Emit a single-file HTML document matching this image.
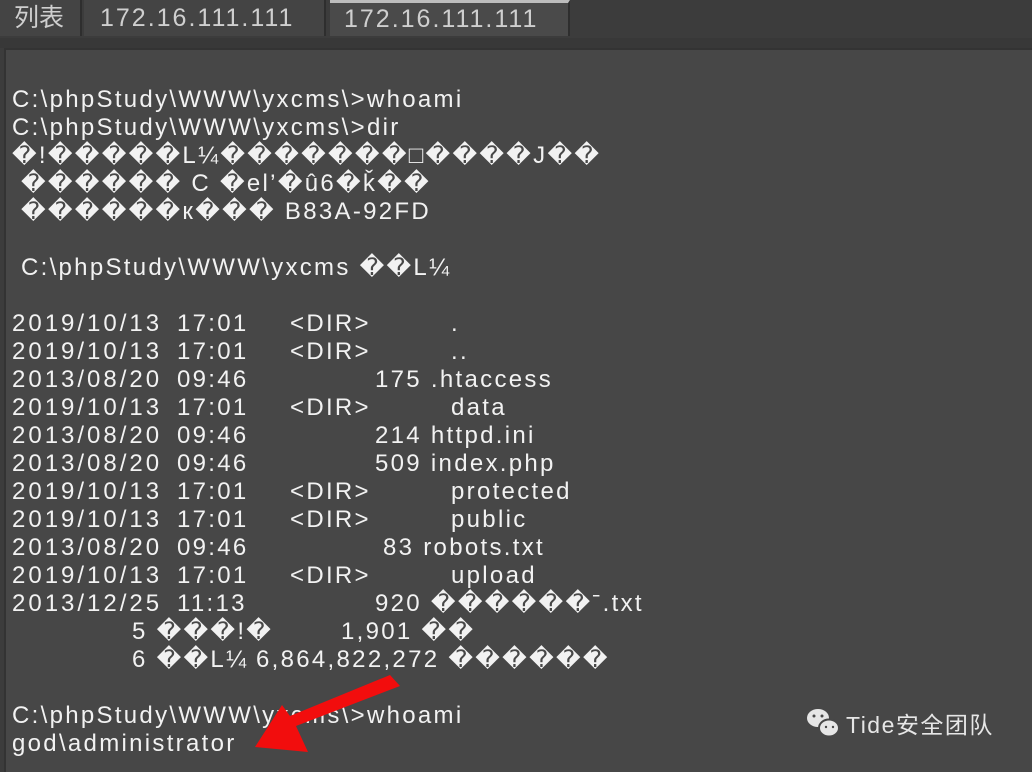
<!DOCTYPE html>
<html><head><meta charset="utf-8"><style>
html,body{margin:0;padding:0}
body{width:1032px;height:772px;background:#3c3c3c;position:relative;overflow:hidden;font-family:"Liberation Sans","Noto Sans CJK SC",sans-serif}
.tab{position:absolute;top:0;height:36px;background:#474747;color:#cfcfcf;font-size:25px;line-height:36px;box-sizing:border-box;border-right:2px solid #2e2e2e;letter-spacing:2px}
.term{position:absolute;left:4px;top:48px;right:0;bottom:0;background:#474747;border-top:2px solid #333;border-left:2px solid #333}
.r{position:absolute;color:#f2f2f2;font-size:24px;white-space:pre;line-height:28px;letter-spacing:2.3px}
.d{letter-spacing:3px}
</style></head><body>
<div class="tab" style="left:0;width:82px;padding-left:14px;background:#444;letter-spacing:0">列表</div>
<div class="tab" style="left:84px;width:242px;padding-left:16px;background:#444">172.16.111.111</div>
<div class="tab" style="left:330px;width:240px;padding-left:14px;background:#4a4a4a;border-top:3px solid #bdbdbd;line-height:33px">172.16.111.111</div>
<div style="position:absolute;left:0;top:38px;width:1032px;height:10px;background:#383838"></div>
<div class="term"></div>
<div class="r" style="left:12px;top:86px">C:\phpStudy\WWW\yxcms\&gt;whoami</div>
<div class="r" style="left:12px;top:114px">C:\phpStudy\WWW\yxcms\&gt;dir</div>
<div class="r" style="left:12px;top:142px">�!�����L¼�������□����J��</div>
<div class="r" style="left:12px;top:170px"> ������ C �el’�û6�ǩ��</div>
<div class="r" style="left:12px;top:198px"> ������к��� B83A-92FD</div>
<div class="r" style="left:12px;top:254px"> C:\phpStudy\WWW\yxcms ��L¼</div>

<div class="r d" style="left:12px;top:310px">2019/10/13</div><div class="r" style="left:177px;top:310px">17:01</div><div class="r" style="left:290px;top:310px">&lt;DIR&gt;</div><div class="r" style="left:451px;top:310px">.</div>
<div class="r d" style="left:12px;top:338px">2019/10/13</div><div class="r" style="left:177px;top:338px">17:01</div><div class="r" style="left:290px;top:338px">&lt;DIR&gt;</div><div class="r" style="left:451px;top:338px">..</div>
<div class="r d" style="left:12px;top:366px">2013/08/20</div><div class="r" style="left:177px;top:366px">09:46</div><div class="r" style="left:375px;top:366px">175 .htaccess</div>
<div class="r d" style="left:12px;top:394px">2019/10/13</div><div class="r" style="left:177px;top:394px">17:01</div><div class="r" style="left:290px;top:394px">&lt;DIR&gt;</div><div class="r" style="left:451px;top:394px">data</div>
<div class="r d" style="left:12px;top:422px">2013/08/20</div><div class="r" style="left:177px;top:422px">09:46</div><div class="r" style="left:375px;top:422px">214 httpd.ini</div>
<div class="r d" style="left:12px;top:450px">2013/08/20</div><div class="r" style="left:177px;top:450px">09:46</div><div class="r" style="left:375px;top:450px">509 index.php</div>
<div class="r d" style="left:12px;top:478px">2019/10/13</div><div class="r" style="left:177px;top:478px">17:01</div><div class="r" style="left:290px;top:478px">&lt;DIR&gt;</div><div class="r" style="left:451px;top:478px">protected</div>
<div class="r d" style="left:12px;top:506px">2019/10/13</div><div class="r" style="left:177px;top:506px">17:01</div><div class="r" style="left:290px;top:506px">&lt;DIR&gt;</div><div class="r" style="left:451px;top:506px">public</div>
<div class="r d" style="left:12px;top:534px">2013/08/20</div><div class="r" style="left:177px;top:534px">09:46</div><div class="r" style="left:383px;top:534px">83 robots.txt</div>
<div class="r d" style="left:12px;top:562px">2019/10/13</div><div class="r" style="left:177px;top:562px">17:01</div><div class="r" style="left:290px;top:562px">&lt;DIR&gt;</div><div class="r" style="left:451px;top:562px">upload</div>
<div class="r d" style="left:12px;top:590px">2013/12/25</div><div class="r" style="left:177px;top:590px">11:13</div><div class="r" style="left:375px;top:590px">920 ������ˉ.txt</div>
<div class="r" style="left:132px;top:618px">5 ���!�</div><div class="r" style="left:341px;top:618px">1,901 ��</div>
<div class="r" style="left:132px;top:646px">6 ��L¼</div><div class="r" style="left:256px;top:646px">6,864,822,272 ������</div>
<div class="r" style="left:12px;top:702px">C:\phpStudy\WWW\yxcms\&gt;whoami</div>
<div class="r" style="left:12px;top:730px">god\administrator</div>

<svg style="position:absolute;left:0;top:0" width="1032" height="772">
<polygon points="390,675 400,686 296,726 308,752 255,747 282,705 290,716" fill="#f20d0d"/>
<g fill="#e6e6e6">
<ellipse cx="818" cy="718" rx="11" ry="9"/>
<ellipse cx="829" cy="728" rx="10" ry="8.5" stroke="#474747" stroke-width="2"/>
<circle cx="814" cy="716" r="1.5" fill="#474747"/><circle cx="822" cy="716" r="1.5" fill="#474747"/>
<circle cx="826" cy="727" r="1.2" fill="#474747"/><circle cx="833" cy="727" r="1.2" fill="#474747"/>
</g>
</svg>
<div style="position:absolute;left:846px;top:710px;font-size:23px;color:#e6e6e6;line-height:30px;letter-spacing:1.5px">Tide安全团队</div>
</body></html>
